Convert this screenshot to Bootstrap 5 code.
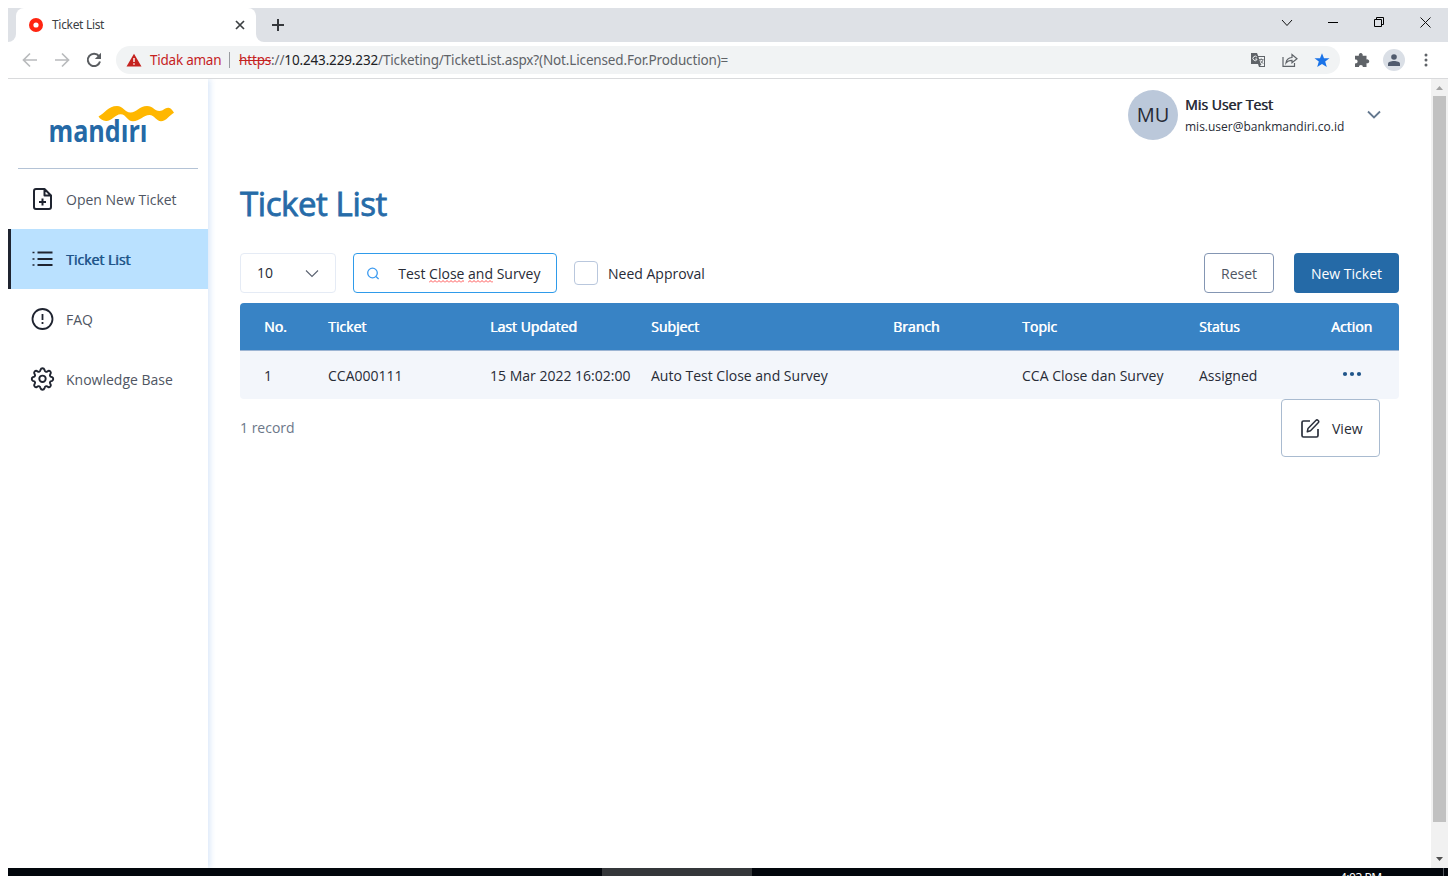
<!DOCTYPE html>
<html lang="en">
<head>
<meta charset="utf-8">
<title>Ticket List</title>
<link rel="stylesheet" href="https://cdn.jsdelivr.net/npm/bootstrap@5.3.0/dist/css/bootstrap.min.css">
<style>
html,body{height:100%;overflow:hidden}
body{font-family:"Open Sans",sans-serif;font-size:14px;line-height:20px;color:#272b36;background:#fff;padding:8px 8px 0}
svg{display:block;flex:none}
.faux{text-shadow:.6px 0 currentColor}
.seg{font-family:"Noto Sans","Open Sans",sans-serif}
.tabstrip{height:34px;background:#dee1e6}
.tabstub{width:8px;background:#dee1e6;border-bottom-right-radius:8px}
.tabrest{background:#dee1e6;border-bottom-left-radius:8px}
.tabpane-top{width:240px;background:#fff;border-radius:8px 8px 0 0;padding:0 11px 0 13px}
.tabtitle{font-size:12px;color:#3c4043;margin-left:9px;letter-spacing:-.32px}
.winctl{width:46px}
.toolbar{height:37px;border-bottom:1px solid #d9dadc}
.omni{height:28px;border-radius:14px;background:#f1f3f4;margin-left:14px;width:1224px;padding:0 10px 0 10px;font-size:13.5px}
.omni .warn{color:#c5221f;margin-left:8px;letter-spacing:-.24px;width:71px;white-space:nowrap}
.omni .sep{width:1px;height:16px;background:#9a9da1;margin:0 9px 0 8px}
.url{color:#5f6368;letter-spacing:-.15px;white-space:nowrap}
.url s{color:#c5221f}.url b{font-weight:400;color:#202124}
.avatar-sm{width:22px;height:22px;border-radius:50%;background:#dadfe6}
.page{height:789px}
.sidebar{width:200px;box-shadow:2px 0 6px rgba(60,130,220,.2);clip-path:inset(0 -10px 0 0)}
.brand{height:90px;margin:0 10px;border-bottom:1px solid #b4c3d6}
.brand svg{margin:21px 0 0 29px}
.side-item{height:60px;padding-left:22px;color:#4f5663;gap:11px}
.side-item span{padding-top:1px}
.side-item.on{background:#bae1ff;border-left:3px solid #1f2430;padding-left:19px;color:#20558a}
.main{padding:11px 32px 0 32px}
.mu{width:50px;height:50px;border-radius:50%;background:#bbc8da;font-size:20px}
.user{margin:0 15px 0 auto;width:256px;height:50px}
.email{font-size:12px;letter-spacing:0}
h1{font-size:33px;line-height:44px;font-weight:400;color:#266ba8;margin:42px 0 27px;letter-spacing:-.42px}
.h1s{-webkit-text-stroke:.8px #266ba8}
.ctl{height:40px;border-radius:4px}
.sel{width:96px;border:1px solid #e5ebf5;padding:0 16px;margin-right:17px}
.srch{width:204px;border:1px solid #2f9bea;padding:0 15.500px 0 13px;margin-right:17px}
.chk{width:24px;height:24px;border:1px solid #b9c7dd;border-radius:4px;margin-right:10px}
.sq{background:url("data:image/svg+xml,%3Csvg xmlns='http://www.w3.org/2000/svg' width='4' height='3'%3E%3Cpath d='M0 2.5L2 .5L4 2.5' fill='none' stroke='%23ff3b3b' stroke-width='.9'/%3E%3C/svg%3E") repeat-x left bottom 0/4px 3px}
.btn-r{width:70px;border:1px solid #8496b3;color:#4f5663;margin-right:20px}
.btn-n{width:105px;background:#256aa7;color:#fff}
.btn-r,.btn-n{font-size:14px;padding:1px 0 0}
.tix{table-layout:fixed;width:1159px;margin:10px 0 0;border-radius:4px;overflow:hidden;border-collapse:separate;border-spacing:0}
.tix th{background:#3883c5;color:#fff;font-weight:400;height:48px;padding:1px 0 0 24px;border-bottom:1px solid #9db5d3;text-align:left}
.tix td{background:#f3f6fb;height:48px;padding:1px 0 0 24px;white-space:nowrap}
.tix .act{padding-left:0;text-align:center}
.menu-pop{top:320px;left:1273px;width:99px;height:58px;border:1px solid #a9bbd0;border-radius:4px;background:#fff;padding-left:19px;gap:12px}
.menu-pop span{padding-top:2px}
.rec{color:#6c7789;margin-top:19px}
.sbar{width:17px;background:#f1f1f1}
.thumb{width:13px;height:726px;background:#c1c1c1}
.taskbar{height:8px;background:#02060c}
.taskbar .act-app{width:150px;margin-left:594px;background:#34373a}
.clock{font-size:12px;line-height:16px;color:#fff;margin-left:588px;padding-top:2px;width:42px;letter-spacing:-.5px;white-space:nowrap}
</style>
</head>
<body>
<div class="tabstrip d-flex">
  <div class="bg-white d-flex"><div class="tabstub"></div></div>
  <div class="tabpane-top d-flex align-items-center seg">
    <svg width="14" height="14"><circle cx="7" cy="7" r="4.8" fill="#fff" stroke="#ff2511" stroke-width="4.4"/></svg>
    <span class="tabtitle me-auto">Ticket List</span>
    <svg width="10" height="10" stroke="#3c4043" stroke-width="1.7"><path d="M1 1l8 8M9 1l-8 8"/></svg>
  </div>
  <div class="bg-white d-flex flex-fill"><div class="tabrest d-flex align-items-center flex-fill">
    <svg width="12" height="12" style="margin-left:16px" class="me-auto" stroke="#35383c" stroke-width="2"><path d="M6 0v12M0 6h12"/></svg>
    <div class="winctl d-flex justify-content-center pb-1"><svg width="12" height="8" fill="none" stroke="#111"><path d="M1 1l5 5.500 5-5.500"/></svg></div>
    <div class="winctl d-flex justify-content-center pb-1"><svg width="10" height="2"><path d="M0 .5h10" stroke="#000" stroke-width="1"/></svg></div>
    <div class="winctl d-flex justify-content-center" style="padding-bottom:6px"><svg width="10" height="10" fill="none" stroke="#000"><path d="M.5 2.500h7v7h-7zM2.500 2.500v-2h7v7h-2"/></svg></div>
    <div class="winctl d-flex justify-content-center" style="padding-bottom:5px"><svg width="11" height="11" stroke="#111"><path d="M.5.5l10 10M10.500.5l-10 10"/></svg></div>
  </div></div>
</div>
<div class="toolbar d-flex align-items-center">
  <svg width="16" height="16" style="margin-left:14px" fill="none" stroke="#b9bbbd" stroke-width="1.700"><path d="M15 8H2M8 1.500L1.500 8 8 14.500"/></svg>
  <svg width="16" height="16" style="margin-left:16px" fill="none" stroke="#b9bbbd" stroke-width="1.700"><path d="M1 8h13M8 1.500L14.500 8 8 14.500"/></svg>
  <svg width="16" height="16" style="margin-left:16px" fill="none" stroke="#5a5d61" stroke-width="2"><path d="M13 4.200A6.200 6.200 0 1 0 14 9.500"/><path d="M15 .8V7H8.800z" fill="#5a5d61" stroke="none"/></svg>
  <div class="omni seg d-flex align-items-center">
    <svg width="16" height="14"><path d="M8 .8L15.500 13.500H.5z" fill="#c5221f"/><path d="M8 5v4M8 10.200v1.600" stroke="#fff" stroke-width="1.400"/></svg>
    <span class="warn">Tidak aman</span><span class="sep"></span>
    <span class="url me-auto"><s>https</s>://<b>10.243.229.232</b>/Ticketing/TicketList.aspx?(Not.Licensed.For.Production)=</span>
    <svg width="14" height="14"><path d="M0 0h6l1.200 3H14v11H8l-1-3H0z" fill="#5f6368"/><path d="M7.500 4h5.500v9H9l1.500-2h-.8z" fill="#f1f3f4"/><path d="M5.900 4A2.200 2.200 0 1 0 6 6.600V6H4.200" stroke="#f1f3f4" fill="none"/><path d="M8 6.500h4.500M10.200 5.300v1.200M12 6.800c-.5 2-1.500 3-2.500 3.800M9.300 7.500l3 3.300" stroke="#5f6368" stroke-width=".8" fill="none"/></svg>
    <svg width="16" height="14" style="margin:0 16px 0 17px" fill="none" stroke="#5f6368" stroke-width="1.200"><path d="M1 4v9.300h11.500V10M4 10c.4-3.500 2.500-5.200 6-5.500V1.500l5 4.200-5 4V7.300C7.500 7.300 5.500 8 4 10z"/></svg>
    <svg width="16" height="15" viewBox="0 0 16 15"><path d="M8 .3l2 5h5.500l-4.300 3.300 1.600 5.400L8 10.900 3.200 14l1.600-5.400L.5 5.300H6z" fill="#1a73e8"/></svg>
  </div>
  <svg width="16" height="16" viewBox="0 0 16 16" style="margin-left:14px"><path d="M1 3.800h3.900a2 2 0 1 1 3.700 0h3.900v3.700a2 2 0 1 1 0 3.700V15H8.900a2 2 0 1 0-4 0H1v-3.700a2 2 0 1 0 0-3.800z" fill="#5f6368"/></svg>
  <div class="avatar-sm d-flex align-items-center justify-content-center" style="margin-left:13px"><svg width="12" height="12"><circle cx="6" cy="3" r="2.800" fill="#505b6e"/><path d="M0 12V9.800C0 8 3 7 6 7s6 1 6 2.800V12z" fill="#505b6e"/></svg></div>
  <svg width="4" height="14" style="margin-left:19px" fill="#5f6368"><circle cx="2" cy="2" r="1.500"/><circle cx="2" cy="7" r="1.500"/><circle cx="2" cy="12" r="1.500"/></svg>
</div>
<div class="page d-flex position-relative">
  <aside class="sidebar flex-shrink-0">
    <div class="brand d-flex"><svg width="132" height="58" viewBox="47 100 132 58">
      <path d="M98.500 116.500C105 113 108 106 117 106c6 0 8 6.500 13.500 6.500 6 0 9-6.500 16.500-6.500 6 0 7.500 5 12.500 5 4 0 5.500-3.500 9-3.200 2.500.2 4 2.500 5.500 4.900-4 2-8 8.600-13 8.600-4.500 0-6.500-6.300-11.500-6.300-6 0-10 6.300-16.500 6.300-6 0-7-7.300-12.500-7-5.500.2-9 7-14.500 6.700-3.500-.2-6-2-7.500-4.500z" fill="#ffb700"/>
      <text x="48.500" y="141.800" font-size="30" font-weight="700" textLength="99" lengthAdjust="spacingAndGlyphs" fill="#2569a6">mandırı</text></svg></div>
    <div class="side-item d-flex align-items-center"><svg width="25" height="26" fill="none" stroke="#1f2430" stroke-width="2" stroke-linejoin="round"><path d="M14.500 3H6a2 2 0 0 0-2 2v16a2 2 0 0 0 2 2h13a2 2 0 0 0 2-2V9.500zM14.500 3v6.500H21M12.500 12.500v7M9 16h7"/></svg><span>Open New Ticket</span></div>
    <div class="side-item on d-flex align-items-center"><svg width="25" height="26" stroke="#1f2430" stroke-width="2"><path d="M7.500 6.500H22.500M7.500 13H22.500M7.500 19H22.500"/><path d="M2.500 6.500h2M2.500 13h2M2.500 19h2" stroke-width="1.600"/></svg><span class="faux">Ticket List</span></div>
    <div class="side-item d-flex align-items-center"><svg width="25" height="26" fill="none" stroke="#1f2430" stroke-width="1.800"><circle cx="12.500" cy="13" r="10"/><path d="M12.500 8v6M12.500 16v2"/></svg><span>FAQ</span></div>
    <div class="side-item d-flex align-items-center"><svg width="25" height="26" viewBox="0 0 25 26" fill="none" stroke="#1f2430" stroke-width="1.900" stroke-linejoin="round"><circle cx="12.500" cy="12.800" r="3.200"/><path d="M10.600 3.600a2 2 0 0 1 3.800 0l.3 1a1.600 1.600 0 0 0 2.400 1l1-.6a2 2 0 0 1 2.600 2.600l-.6 1a1.600 1.600 0 0 0 1 2.300l1 .3a2 2 0 0 1 0 3.600l-1 .3a1.600 1.600 0 0 0-1 2.300l.6 1a2 2 0 0 1-2.600 2.600l-1-.6a1.600 1.600 0 0 0-2.400 1l-.3 1a2 2 0 0 1-3.800 0l-.3-1a1.600 1.600 0 0 0-2.400-1l-1 .6a2 2 0 0 1-2.600-2.600l.6-1a1.600 1.600 0 0 0-1-2.300l-1-.3a2 2 0 0 1 0-3.600l1-.3a1.600 1.600 0 0 0 1-2.300l-.6-1a2 2 0 0 1 2.600-2.600l1 .6a1.600 1.600 0 0 0 2.400-1z"/></svg><span>Knowledge Base</span></div>
  </aside>
  <main class="main flex-fill">
    <div class="user d-flex align-items-center">
      <div class="mu d-flex align-items-center justify-content-center">MU</div>
      <div style="margin-left:7px" class="me-auto pt-1"><div class="faux" style="margin-top:-2px">Mis User Test</div><div class="email" style="margin-top:2px">mis.user@bankmandiri.co.id</div></div>
      <svg width="16" height="10" style="margin-right:2px" fill="none" stroke="#64788f" stroke-width="1.800"><path d="M2 1.500l6 6 6-6"/></svg>
    </div>
    <h1><span class="h1s">Ticket List</span></h1>
    <div class="d-flex align-items-center" style="width:1159px">
      <div class="ctl sel d-flex align-items-center justify-content-between"><span>10</span><svg width="14" height="9" fill="none" stroke="#5a6270" stroke-width="1.100"><path d="M1 1.500l6 6 6-6"/></svg></div>
      <div class="ctl srch d-flex align-items-center"><svg width="12" height="13" class="me-auto" fill="none" stroke="#3d9bf0" stroke-width="1.300"><circle cx="5.500" cy="6" r="4.800"/><path d="M9 9.500l2.600 2.600"/></svg><span class="text-nowrap" style="padding-top:2px">Test <span class="sq">Close</span> <span class="sq">and</span> Survey</span></div>
      <div class="chk"></div><span class="me-auto" style="padding-top:2px">Need Approval</span>
      <button class="btn ctl btn-r">Reset</button><button class="btn ctl btn-n">New Ticket</button>
    </div>
    <table class="tix">
      <colgroup><col style="width:64px"><col style="width:162px"><col style="width:161px"><col style="width:242px"><col style="width:129px"><col style="width:177px"><col style="width:129px"><col></colgroup>
      <thead><tr class="faux"><th>No.</th><th>Ticket</th><th>Last Updated</th><th>Subject</th><th>Branch</th><th>Topic</th><th>Status</th><th class="act">Action</th></tr></thead>
      <tbody><tr><td>1</td><td>CCA000111</td><td>15 Mar 2022 16:02:00</td><td>Auto Test Close and Survey</td><td></td><td>CCA Close dan Survey</td><td>Assigned</td><td class="act"><svg width="20" height="6" class="mx-auto mb-1" fill="#20558a"><circle cx="3" cy="3" r="2.100"/><circle cx="10" cy="3" r="2.100"/><circle cx="17" cy="3" r="2.100"/></svg></td></tr></tbody>
    </table>
    <div class="rec">1 record</div>
  </main>
  <div class="menu-pop position-absolute d-flex align-items-center">
    <svg width="19" height="19" fill="none" stroke="#2b303c" stroke-width="1.700" stroke-linejoin="round"><path d="M9 2H2.500A1.500 1.500 0 0 0 1 3.500v13A1.500 1.500 0 0 0 2.500 18h13a1.500 1.500 0 0 0 1.500-1.500V10"/><path d="M7 9.500L14.800 1.500a1.600 1.600 0 0 1 2.400 2.300L9.500 11.800 6.300 12.700z" stroke-width="1.500"/></svg><span>View</span>
  </div>
  <div class="sbar d-flex flex-column align-items-center flex-shrink-0">
    <svg width="17" height="17"><path d="M5 11h7L8.500 7z" fill="#a3a3a3"/></svg>
    <div class="thumb"></div>
    <svg width="17" height="17" class="mt-auto"><path d="M5 6h7L8.500 10z" fill="#505050"/></svg>
  </div>
</div>
<div class="taskbar d-flex overflow-hidden seg"><div class="act-app"></div><div class="clock">4:03 PM</div><div style="width:1px;margin-left:61px;background:#555a60"></div></div>
<script src="https://cdn.jsdelivr.net/npm/bootstrap@5.3.0/dist/js/bootstrap.bundle.min.js"></script>
</body>
</html>
